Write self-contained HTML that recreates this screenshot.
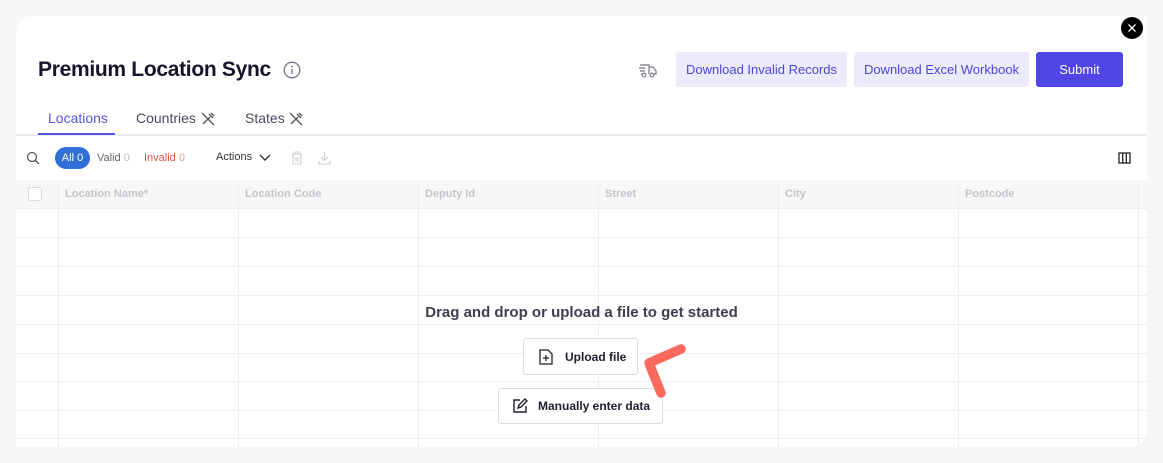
<!DOCTYPE html>
<html><head><style>
*{box-sizing:border-box;margin:0;padding:0}
body{width:1163px;height:463px;background:#f7f7f9;font-family:"Liberation Sans",sans-serif;position:relative;overflow:hidden}
.card{position:absolute;left:16px;top:16px;width:1131px;height:431px;background:#fff;border-radius:16px 0 16px 0;overflow:hidden}
.abs{position:absolute}
h1{position:absolute;left:22px;top:42px;font-size:21px;font-weight:bold;color:#14142b;letter-spacing:-0.3px}
.btn{position:absolute;top:36px;height:35px;border-radius:3px;font-size:13px;display:flex;align-items:center;justify-content:center}
.lt{background:#ebebfc;color:#4b47d6}
.tab{position:absolute;top:94px;font-size:14px;color:#4a4a5e}
.hdr{position:absolute;top:164px;height:28px;left:0;width:1131px;background:#f7f7f8}
.hc{position:absolute;top:172px;font-size:11px;color:#c3c5cb;font-weight:bold}
.vl{position:absolute;top:164px;bottom:0;width:1px;background:#eeeef0}
.hl{position:absolute;left:0;width:1131px;height:1px;background:#efeff1}
.sb{position:absolute;background:#fff;border:1px solid #dcdce3;border-radius:3px;display:flex;align-items:center;font-size:12px;font-weight:bold;color:#1f1f2e}
</style></head><body>
<div class="card">
<h1>Premium Location Sync</h1>
<svg class="abs" style="left:267px;top:45px" width="18" height="18" viewBox="0 0 18 18"><circle cx="9" cy="9" r="7.8" fill="none" stroke="#7a7a88" stroke-width="1.3"/><circle cx="9" cy="5.6" r="0.9" fill="#7a7a88"/><path d="M9 8v5" stroke="#7a7a88" stroke-width="1.4"/></svg>
<svg class="abs" style="left:622px;top:45px" width="20" height="18" viewBox="0 0 20 18"><path d="M2 4h9v9M1 7h6M2 10h5M11 6h4l3 4v3h-2M4 13h-1" fill="none" stroke="#8a8a96" stroke-width="1.4"/><circle cx="6" cy="14" r="1.8" fill="none" stroke="#8a8a96" stroke-width="1.3"/><circle cx="14" cy="14" r="1.8" fill="none" stroke="#8a8a96" stroke-width="1.3"/></svg>
<div class="btn lt" style="left:660px;width:171px">Download Invalid Records</div>
<div class="btn lt" style="left:838px;width:175px">Download Excel Workbook</div>
<div class="btn" style="left:1020px;width:87px;background:#4f46e5;color:#fff">Submit</div>
<div class="tab" style="left:32px;color:#5a55e0">Locations</div>
<div class="tab" style="left:120px">Countries</div>
<div class="tab" style="left:229px">States</div>
<svg class="abs" style="left:184px;top:95px" width="16" height="15" viewBox="0 0 16 15"><path d="M2 2l12 12M3 13l7-7M9 3l4 4M11 2l3 3" stroke="#555" stroke-width="1.3" fill="none"/></svg>
<svg class="abs" style="left:272px;top:95px" width="16" height="15" viewBox="0 0 16 15"><path d="M2 2l12 12M3 13l7-7M9 3l4 4M11 2l3 3" stroke="#555" stroke-width="1.3" fill="none"/></svg>
<div class="abs" style="left:0;top:118px;width:1131px;height:2px;background:#e8ebf0"></div>
<div class="abs" style="left:22px;top:117px;width:77px;height:2px;background:#5a55e0"></div>
<svg class="abs" style="left:10px;top:135px" width="14" height="14" viewBox="0 0 14 14"><circle cx="6" cy="6" r="4.5" fill="none" stroke="#555" stroke-width="1.3"/><path d="M9.5 9.5l3.5 3.5" stroke="#555" stroke-width="1.3"/></svg>
<div class="abs" style="left:39px;top:131px;width:35px;height:22px;border-radius:11px;background:#2f6fd6;color:#fff;font-size:11px;display:flex;align-items:center;justify-content:center">All 0</div>
<div class="abs" style="left:81px;top:136px;font-size:11px;color:#666">Valid <span style="color:#bbb">0</span></div>
<div class="abs" style="left:128px;top:136px;font-size:11px;color:#d9533e">Invalid <span style="color:#f0a090">0</span></div>
<div class="abs" style="left:200px;top:135px;font-size:11px;color:#333">Actions</div>
<svg class="abs" style="left:243px;top:138px" width="12" height="8" viewBox="0 0 12 8"><path d="M1 1l5 5 5-5" stroke="#333" stroke-width="1.4" fill="none"/></svg>
<svg class="abs" style="left:275px;top:135px" width="12" height="14" viewBox="0 0 12 14"><path d="M1 3h10M4 3V1h4v2M2 3v10h8V3M5 6v5M7 6v5" stroke="#ccc" stroke-width="1.1" fill="none"/></svg>
<svg class="abs" style="left:302px;top:135px" width="13" height="14" viewBox="0 0 13 14"><path d="M6.5 1v8M3 6l3.5 3.5L10 6M1 10v3h11v-3" stroke="#ccc" stroke-width="1.1" fill="none"/></svg>
<svg class="abs" style="left:1102px;top:136px" width="13" height="12" viewBox="0 0 13 12"><rect x="1" y="1" width="11" height="10" fill="none" stroke="#222" stroke-width="1.3"/><path d="M4.7 1v10M8.3 1v10" stroke="#222" stroke-width="1.3"/></svg>
<div class="hdr"></div>
<div class="abs" style="left:12px;top:171px;width:14px;height:14px;border:1px solid #d8d8de;border-radius:3px;background:#fff"></div>
<div class="hc" style="left:49px">Location Name*</div>
<div class="hc" style="left:229px">Location Code</div>
<div class="hc" style="left:409px">Deputy Id</div>
<div class="hc" style="left:589px">Street</div>
<div class="hc" style="left:769px">City</div>
<div class="hc" style="left:949px">Postcode</div>
<div class="vl" style="left:42px"></div><div class="vl" style="left:222px"></div><div class="vl" style="left:402px"></div><div class="vl" style="left:582px"></div><div class="vl" style="left:762px"></div><div class="vl" style="left:942px"></div><div class="vl" style="left:1122px"></div>
<div class="hl" style="top:192px"></div><div class="hl" style="top:221px"></div><div class="hl" style="top:250px"></div><div class="hl" style="top:279px"></div><div class="hl" style="top:308px"></div><div class="hl" style="top:337px"></div><div class="hl" style="top:365px"></div><div class="hl" style="top:394px"></div><div class="hl" style="top:422px"></div>
<div class="abs" style="left:0;top:288px;width:1131px;text-align:center;font-size:15px;font-weight:bold;color:#3e3e4e"><span style="background:#fff;padding:0 2px">Drag and drop or upload a file to get started</span></div>
<div class="sb" style="left:507px;top:322px;width:115px;height:37px;padding-left:15px"><svg width="14" height="16" viewBox="0 0 14 16" style="margin-right:12px"><path d="M1 1h8l4 4v10H1zM7 6v6M4 9h6" fill="none" stroke="#1f1f2e" stroke-width="1.3"/></svg>Upload file</div>
<div class="sb" style="left:482px;top:372px;width:165px;height:36px;padding-left:13px"><svg width="16" height="16" viewBox="0 0 16 16" style="margin-right:10px"><path d="M8 2H2v12h12V8M6 10l1-3 6-6 2 2-6 6z" fill="none" stroke="#1f1f2e" stroke-width="1.4"/></svg>Manually enter data</div>
<svg class="abs" style="left:0;top:0" width="1131" height="431"><path d="M665 333L633 347L645 377" fill="none" stroke="#fb6a5d" stroke-width="9.5" stroke-linecap="round" stroke-linejoin="round"/></svg>
</div>
<div class="abs" style="left:1121px;top:17px;width:22px;height:22px;border-radius:50%;background:#000"></div>
<svg class="abs" style="left:1121px;top:17px" width="22" height="22"><path d="M7.5 7.5l7 7M14.5 7.5l-7 7" stroke="#fff" stroke-width="1.3"/></svg>
</body></html>
